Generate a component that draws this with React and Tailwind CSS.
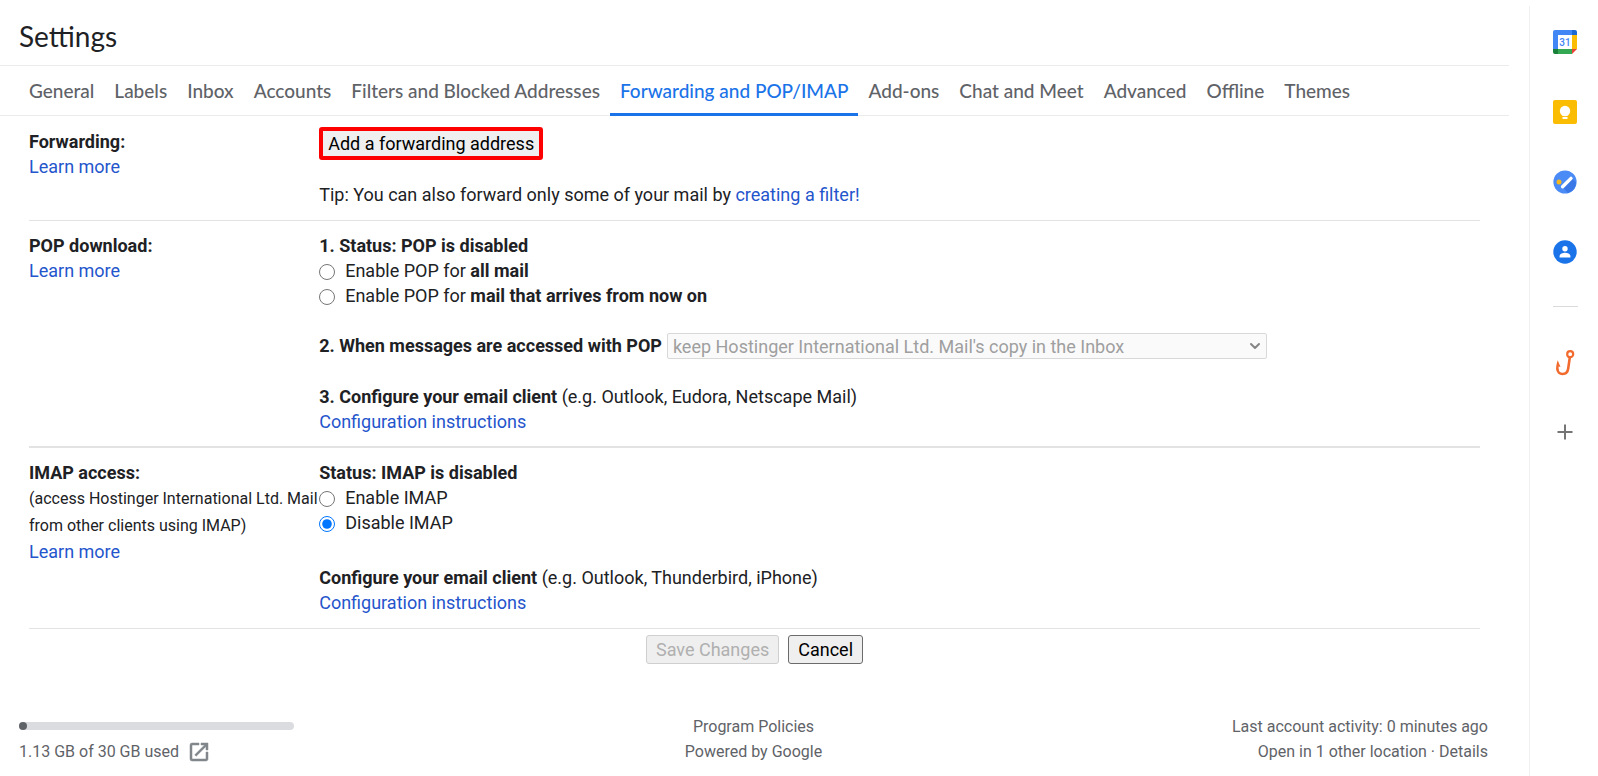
import { useState } from "react";
import { ChevronDown } from "lucide-react";

const TABS = [
    "General",
    "Labels",
    "Inbox",
    "Accounts",
    "Filters and Blocked Addresses",
    "Forwarding and POP/IMAP",
    "Add-ons",
    "Chat and Meet",
    "Advanced",
    "Offline",
    "Themes",
];

function Link({ children }) {
    return (
        <a href="#" className="text-[#2455cc] hover:underline">
            {children}
        </a>
    );
}

// One settings row: name on the left, controls on the right
function Section({ title, note, className, children }) {
    return (
        <section className={`grid grid-cols-[1fr_4fr] border-[#e3e3e3] pt-3 ${className}`}>
            <div>
                <h2 className="font-bold">{title}</h2>
                {note && <p className="text-base leading-[27px]">{note}</p>}
                <Link>Learn more</Link>
            </div>
            <div>{children}</div>
        </section>
    );
}

function Radio({ name, value, checked, onChange, children }) {
    return (
        <label className="flex items-center">
            <input
                type="radio"
                name={name}
                checked={checked}
                onChange={() => onChange(value)}
                className="mt-[3px] mr-[10px] size-4"
            />
            <span>{children}</span>
        </label>
    );
}

function CalendarIcon() {
    return (
        <svg viewBox="0 0 24 24" className="size-6">
            <path d="M2 0h17v5H5v14H0V2a2 2 0 0 1 2-2z" fill="#4285f4" />
            <path d="M19 0h3a2 2 0 0 1 2 2v3h-5z" fill="#1967d2" />
            <path d="M19 5h5v14h-5z" fill="#fbbc04" />
            <path d="M5 19h14v5H5z" fill="#34a853" />
            <path d="M0 19h5v5H2a2 2 0 0 1-2-2z" fill="#188038" />
            <path d="M19 24v-5h5z" fill="#ea4335" />
            <path d="M5 5h14v14H5z" fill="#fff" />
            <text
                x="12"
                y="16"
                textAnchor="middle"
                fontSize="10"
                fontWeight="500"
                fill="#4285f4"
                fontFamily="Roboto, sans-serif"
            >
                31
            </text>
        </svg>
    );
}

function KeepIcon() {
    return (
        <svg viewBox="0 0 24 24" className="size-6">
            <rect width="24" height="24" rx="2" fill="#fbbc04" />
            <circle cx="12" cy="11" r="5.2" fill="#fff" />
            <path d="M9.5 13h5v3h-5zM9.5 17h5v2h-5z" fill="#fff" />
        </svg>
    );
}

function TasksIcon() {
    return (
        <svg viewBox="0 0 24 24" className="size-6">
            <circle cx="12" cy="12" r="11.6" fill="#4b8bf5" />
            <path d="M9.6 17.6l9.4-9.4 4 4A11.6 11.6 0 0 1 15 23z" fill="#3b78e7" />
            <circle cx="6" cy="12" r="2.5" fill="#f4b71c" />
            <path d="M9.6 16.8l8.4-8.4" stroke="#fff" strokeWidth="3.4" strokeLinecap="round" />
        </svg>
    );
}

function ContactsIcon() {
    return (
        <svg viewBox="0 0 24 24" className="size-6">
            <circle cx="12" cy="12" r="11.7" fill="#1a73e8" />
            <circle cx="12" cy="8.7" r="2.7" fill="#fff" />
            <path d="M6.6 17.6v-1.4c0-2.2 3-3.4 5.4-3.4s5.4 1.2 5.4 3.4v1.4z" fill="#fff" />
        </svg>
    );
}

function HookIcon() {
    return (
        <svg viewBox="0 0 24 26" className="h-[26px] w-6" fill="none" stroke="#f26a2e">
            <circle cx="17.2" cy="4.2" r="3" strokeWidth="2.2" />
            <path d="M16.8 7.4l-1.600 11.200c-.5 3.400-2.600 5.400-5.600 5.400-3 0-5.200-2.100-5.200-5.200" strokeWidth="2.6" />
            <path d="M3.100 19.600c-.1-3.600.6-6.600 1.600-9.400l2.800 6.900-1.900-.6v3.100z" fill="#f26a2e" stroke="none" />
        </svg>
    );
}

function SidePanel() {
    return (
        <aside className="mt-[6px] flex w-[69px] shrink-0 flex-col items-center border-l border-[#f0f0f0] pt-6 pl-[2px]">
            <div className="flex flex-col items-center gap-[46px]">
                <button aria-label="Calendar"><CalendarIcon /></button>
                <button aria-label="Keep"><KeepIcon /></button>
                <button aria-label="Tasks"><TasksIcon /></button>
                <button aria-label="Contacts"><ContactsIcon /></button>
            </div>
            <hr className="mt-[42px] w-[25px] border-[#dadada]" />
            <button aria-label="Mail tracking" className="mt-[43px]"><HookIcon /></button>
            <button aria-label="Get add-ons" className="mt-11">
                <svg viewBox="0 0 24 24" className="size-6" stroke="#757575" strokeWidth="2">
                    <path d="M12 4.5v15M4.5 12h15" />
                </svg>
            </button>
        </aside>
    );
}

export default function App() {
    const [tab, setTab] = useState("Forwarding and POP/IMAP");
    const [pop, setPop] = useState(null);
    const [imap, setImap] = useState("disable");

    return (
        <div className="flex min-h-screen bg-white font-['Roboto',sans-serif] text-[18px] leading-[25px] text-[#202124]">
            <main className="min-w-0 flex-1 pr-5">
                <h1 className="px-[19px] pt-4 pb-[9px] font-['Lato',sans-serif] text-[28px] leading-10">Settings</h1>

                <nav className="flex h-[51px] border-y border-[#ebebeb] px-[19px] font-['Lato',sans-serif] text-[19px] font-medium">
                    {TABS.map((name) => (
                        <button
                            key={name}
                            onClick={() => setTab(name)}
                            className={
                                name === tab
                                    ? "-mb-px border-b-[3px] border-[#1a73e8] px-[10px] pt-px whitespace-nowrap text-[#1a73e8]"
                                    : "-mb-px border-b-[3px] border-transparent px-[10px] pt-px whitespace-nowrap text-[#5f6368]"
                            }
                        >
                            {name}
                        </button>
                    ))}
                </nav>

                <div className="px-[29px] pt-px">
                    <Section title="Forwarding:" className="border-b pb-[13px]">
                        <button className="-mt-[2px] mb-[22px] block h-[33px] rounded-[3px] border-4 border-[#ff0000] bg-[#efefef] px-[5px] pb-px text-black">
                            Add a forwarding address
                        </button>
                        <p>
                            Tip: You can also forward only some of your mail by <Link>creating a filter!</Link>
                        </p>
                    </Section>

                    <Section title="POP download:" className="border-b-2 pb-3">
                        <h3 className="font-bold">1. Status: POP is disabled</h3>
                        <Radio name="pop" value="all" checked={pop === "all"} onChange={setPop}>
                            Enable POP for <b>all mail</b>
                        </Radio>
                        <Radio name="pop" value="new" checked={pop === "new"} onChange={setPop}>
                            Enable POP for <b>mail that arrives from now on</b>
                        </Radio>
                        <div className="my-[25px] flex gap-[5px]">
                            <label htmlFor="pop-action" className="font-bold whitespace-nowrap">
                                2. When messages are accessed with POP
                            </label>
                            <div className="relative">
                                <select
                                    id="pop-action"
                                    disabled
                                    className="h-[26px] w-[600px] appearance-none rounded-[2px] border border-[#d9d9d9] bg-[#fafafa] px-[5px] text-[#9f9f9f]"
                                >
                                    <option>keep Hostinger International Ltd. Mail's copy in the Inbox</option>
                                </select>
                                <ChevronDown className="pointer-events-none absolute top-[5px] right-1 size-4 text-[#858585]" strokeWidth={3} />
                            </div>
                        </div>
                        <p>
                            <b>3. Configure your email client</b> (e.g. Outlook, Eudora, Netscape Mail)
                        </p>
                        <Link>Configuration instructions</Link>
                    </Section>

                    <Section
                        title="IMAP access:"
                        note="(access Hostinger International Ltd. Mail from other clients using IMAP)"
                        className="border-b pb-[13px]"
                    >
                        <h3 className="font-bold">Status: IMAP is disabled</h3>
                        <Radio name="imap" value="enable" checked={imap === "enable"} onChange={setImap}>
                            Enable IMAP
                        </Radio>
                        <Radio name="imap" value="disable" checked={imap === "disable"} onChange={setImap}>
                            Disable IMAP
                        </Radio>
                        <p className="mt-[30px]">
                            <b>Configure your email client</b> (e.g. Outlook, Thunderbird, iPhone)
                        </p>
                        <Link>Configuration instructions</Link>
                    </Section>

                    <div className="mt-[6px] flex justify-center gap-[9px]">
                        <button disabled className="h-[29px] rounded-[3px] border border-[#cfcfcf] bg-[#efefef] px-[9px] text-[#b0b0b0]">
                            Save Changes
                        </button>
                        <button className="h-[29px] rounded-[3px] border border-[#6b6b6b] bg-[#efefef] px-[9px] text-black">
                            Cancel
                        </button>
                    </div>
                </div>

                <footer className="mt-[50px] grid grid-cols-3 pr-[21px] pl-[19px] text-base leading-[25px] text-[#5f6368]">
                    <div>
                        <div className="mt-2 mb-[9px] h-2 w-[275px] rounded-full bg-[#dadce0]">
                            <div className="size-2 rounded-full bg-[#5f6368]" />
                        </div>
                        <div className="flex items-center gap-2">
                            1.13 GB of 30 GB used
                            <a href="#" aria-label="Manage storage">
                                <svg viewBox="0 0 24 24" className="size-6" fill="#80868b">
                                    <path d="M19 19H5V5h7V3H5a2 2 0 0 0-2 2v14a2 2 0 0 0 2 2h14c1.100 0 2-.9 2-2v-7h-2v7zM14 3v2h3.590l-9.830 9.830 1.410 1.410L19 6.410V10h2V3h-7z" stroke="#80868b" strokeWidth=".5" />
                                </svg>
                            </a>
                        </div>
                    </div>
                    <div className="text-center">
                        <p><a href="#">Program Policies</a></p>
                        <p>Powered by <a href="#">Google</a></p>
                    </div>
                    <div className="text-right">
                        <p>Last account activity: 0 minutes ago</p>
                        <p>Open in 1 other location · <a href="#">Details</a></p>
                    </div>
                </footer>
            </main>
            <SidePanel />
        </div>
    );
}
